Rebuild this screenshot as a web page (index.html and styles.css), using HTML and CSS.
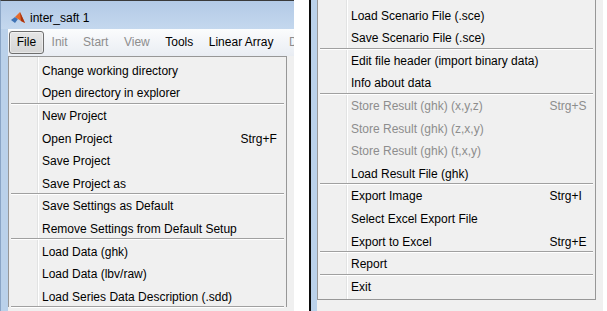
FILE: index.html
```html
<!DOCTYPE html>
<html lang="en">

<head>
    <meta charset="UTF-8">
    <meta name="viewport" content="width=device-width, initial-scale=1.0">
    <title>inter_saft 1 - File menu</title>
    <link rel="stylesheet" href="styles.css">
</head>

<body>
    <div class="screen">
        <div class="window window-left">
            <div class="titlebar">
                <svg class="app-icon" width="14" height="12" viewBox="0 0 14 12">
                    <path d="M0 8 L4 5 L7 7 L4 11 Z" fill="#3f73b5" />
                    <path d="M4 5 L9 0 L14 11 L10 9 L7 7 Z" fill="#e46a2b" />
                    <path d="M9 0 L10 9 L14 11 Z" fill="#a9330f" />
                </svg>
                <span>inter_saft 1</span>
            </div>
            <div class="frame">
                <div class="menubar">
                    <span class="menu-title open">File</span>
                    <span class="menu-title disabled">Init</span>
                    <span class="menu-title disabled">Start</span>
                    <span class="menu-title disabled">View</span>
                    <span class="menu-title">Tools</span>
                    <span class="menu-title">Linear Array</span>
                    <span class="menu-title disabled">Data</span>
                </div>
                <div class="client">
                    <ul class="dropdown">
                        <li class="item"><span class="label">Change working directory</span></li>
                        <li class="item"><span class="label">Open directory in explorer</span></li>
                        <li class="sep"></li>
                        <li class="item"><span class="label">New Project</span></li>
                        <li class="item"><span class="label">Open Project</span><span class="key">Strg+F</span></li>
                        <li class="item"><span class="label">Save Project</span></li>
                        <li class="item"><span class="label">Save Project as</span></li>
                        <li class="sep"></li>
                        <li class="item"><span class="label">Save Settings as Default</span></li>
                        <li class="item"><span class="label">Remove Settings from Default Setup</span></li>
                        <li class="sep"></li>
                        <li class="item"><span class="label">Load Data (ghk)</span></li>
                        <li class="item"><span class="label">Load Data (lbv/raw)</span></li>
                        <li class="item"><span class="label">Load Series Data Description (.sdd)</span></li>
                        <li class="sep"></li>
                    </ul>
                </div>
            </div>
        </div>

        <div class="window window-right">
            <div class="frame">
                <div class="client">
                    <ul class="dropdown continued">
                        <li class="item"><span class="label">Load Scenario File (.sce)</span></li>
                        <li class="item"><span class="label">Save Scenario File (.sce)</span></li>
                        <li class="sep"></li>
                        <li class="item"><span class="label">Edit file header (import binary data)</span></li>
                        <li class="item"><span class="label">Info about data</span></li>
                        <li class="sep"></li>
                        <li class="item disabled"><span class="label">Store Result (ghk) (x,y,z)</span><span class="key">Strg+S</span></li>
                        <li class="item disabled"><span class="label">Store Result (ghk) (z,x,y)</span></li>
                        <li class="item disabled"><span class="label">Store Result (ghk) (t,x,y)</span></li>
                        <li class="item"><span class="label">Load Result File (ghk)</span></li>
                        <li class="sep"></li>
                        <li class="item"><span class="label">Export Image</span><span class="key">Strg+I</span></li>
                        <li class="item"><span class="label">Select Excel Export File</span></li>
                        <li class="item"><span class="label">Export to Excel</span><span class="key">Strg+E</span></li>
                        <li class="sep"></li>
                        <li class="item"><span class="label">Report</span></li>
                        <li class="sep"></li>
                        <li class="item"><span class="label">Exit</span></li>
                    </ul>
                </div>
            </div>
        </div>
    </div>
</body>

</html>
```

FILE: styles.css
```css
* {
    box-sizing: border-box;
}

body {
    margin: 0;
    background: #fff;
    font-family: "Liberation Sans", Arial, sans-serif;
    font-size: 12px;
    color: #000;
}

.screen {
    display: flex;
    gap: 15px;
    width: 607px;
    height: 311px;
    overflow: hidden;
}

.window {
    width: 294px;
    flex: none;
    display: flex;
    flex-direction: column;
    overflow: hidden;
}

.window-left {
    border-top: 1px solid #3a3a3a;
    border-left: 1px solid #8aa5c6;
}

.window-right {
    border-left: 2px solid #0c0c0c;
}

.titlebar {
    flex: none;
    height: 28px;
    display: flex;
    align-items: flex-start;
    gap: 5px;
    padding: 10px 0 0 10px;
    line-height: 14px;
    background: linear-gradient(#b3cae6, #c4d8ee);
}

.app-icon {
    margin-top: 1px;
}

.frame {
    flex: 1;
    min-height: 0;
    display: flex;
    flex-direction: column;
    padding-left: 7px;
    background: #bad1ea;
}

.window-right .frame {
    padding-left: 6px;
}

.menubar {
    flex: none;
    height: 27px;
    display: flex;
    padding: 2px 0 0 1px;
    overflow: hidden;
    background: linear-gradient(#fbfcfd, #e9edf3);
}

.menu-title {
    flex: none;
    height: 23px;
    padding: 0 6.75px;
    border: 1px solid transparent;
    border-radius: 3px;
    line-height: 21px;
    white-space: nowrap;
}

.menu-title.open {
    border-color: #6e6e6e;
    background: linear-gradient(#e6e6e6, #d5d5d5);
    box-shadow: inset 0 0 0 1px rgba(255, 255, 255, 0.45);
}

.disabled {
    color: #8d8d8d;
}

.client {
    flex: 1;
    min-height: 0;
    background: #f0f0f0;
}

.dropdown {
    width: 279px;
    margin: 0;
    padding: 2.5px 0 0;
    list-style: none;
    border: 1px solid #979797;
    border-bottom: none;
    background: linear-gradient(to right, #f0f0f0 28px, #e2e3e3 28px, #e2e3e3 29px, #fff 29px, #fff 30px, #f0f0f0 30px);
}

.dropdown.continued {
    border-top: none;
    border-bottom: 1px solid #979797;
    padding: 4.4px 0 1px;
}

.item {
    display: flex;
    align-items: center;
    height: 22.6px;
    padding-left: 33px;
    line-height: 14px;
    white-space: nowrap;
}

.label {
    flex: 1;
}

.key {
    flex: none;
    width: 45.5px;
}

.sep {
    height: 1px;
    margin: -2px 2px 1px;
    background: #a0a0a0;
    box-shadow: 0 1px 0 #fff;
}
```
